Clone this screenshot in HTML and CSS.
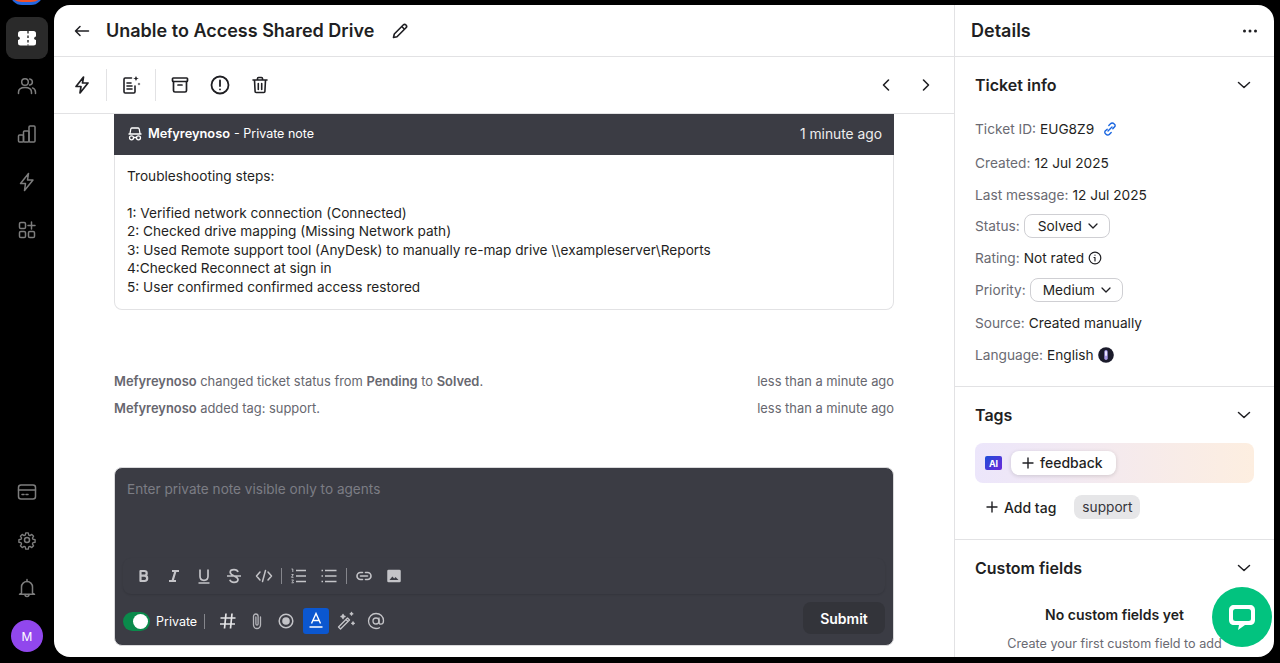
FILE: index.html
```html
<!DOCTYPE html>
<html>
<head>
    <meta charset="utf-8">
    <title>Ticket</title>
    <link rel="stylesheet" href="styles.css">
</head>
<body>
<nav class="rail">
    <div class="logo-sliver"></div>
    <a class="rail-item active">
        <svg width="20" height="20" viewBox="0 0 20 20"><rect x="1" y="3" width="18" height="14.5" rx="2.5" fill="#fff"/><circle cx="1" cy="10.2" r="1.8" fill="#2a2a2a"/><circle cx="19" cy="10.2" r="1.8" fill="#2a2a2a"/><path d="M11 3v14.500" stroke="#2a2a2a" stroke-width="1.4" stroke-dasharray="2.5 2"/></svg>
    </a>
    <a class="rail-item">
        <svg width="20" height="20" viewBox="0 0 20 20" fill="none" stroke="#7d7d7d" stroke-width="1.5" stroke-linecap="round"><circle cx="8" cy="6" r="3.3"/><path d="M1.500 17.500v-1.200c0-2.900 2.400-4.800 6.500-4.800s6.500 1.900 6.500 4.800v1.200"/><path d="M12.700 2.900c1.600.3 2.700 1.600 2.700 3.100s-1.100 2.800-2.700 3.100M15.500 11.900c1.900.7 3 2.200 3 4.300v1.300"/></svg>
    </a>
    <a class="rail-item">
        <svg width="20" height="20" viewBox="0 0 20 20" fill="none" stroke="#7d7d7d" stroke-width="1.5" stroke-linejoin="round"><rect x="1.5" y="11" width="5" height="7" rx="1"/><rect x="6.5" y="7" width="5.5" height="11" rx="1"/><rect x="12" y="2" width="6" height="16" rx="1"/></svg>
    </a>
    <a class="rail-item">
        <svg width="20" height="20" viewBox="0 0 20 20" fill="none" stroke="#7d7d7d" stroke-width="1.5" stroke-linejoin="round"><path d="M11.500 1.500 3.500 11.500h5l-1 7 8.500-10.500h-5.500z"/></svg>
    </a>
    <a class="rail-item">
        <svg width="20" height="20" viewBox="0 0 20 20" fill="none" stroke="#7d7d7d" stroke-width="1.5" stroke-linecap="round"><rect x="2.5" y="2.5" width="6" height="6" rx="1.3"/><rect x="2.5" y="11.5" width="6" height="6" rx="1.3"/><rect x="11.5" y="11.5" width="6" height="6" rx="1.3"/><path d="M14.500 2v7M11 5.500h7"/></svg>
    </a>
    <div class="rail-spacer"></div>
    <a class="rail-item">
        <svg width="20" height="20" viewBox="0 0 20 20" fill="none" stroke="#7d7d7d" stroke-width="1.5" stroke-linecap="round"><rect x="1.5" y="3" width="17" height="14" rx="2.5"/><path d="M1.500 8h17M5 12.500h2M9 12.500h2"/></svg>
    </a>
    <a class="rail-item">
        <svg width="20" height="20" viewBox="0 0 24 24" fill="none" stroke="#7d7d7d" stroke-width="1.8" stroke-linejoin="round"><circle cx="12" cy="12" r="3"/><path d="M10.300 2.500h3.400l.6 2.900 1.600.7 2.500-1.600 2.400 2.400-1.600 2.500.7 1.600 2.900.6v3.400l-2.900.6-.7 1.600 1.600 2.500-2.400 2.400-2.500-1.600-1.600.7-.6 2.900h-3.400l-.6-2.900-1.600-.7-2.500 1.600-2.400-2.400 1.600-2.500-.7-1.600-2.900-.6v-3.400l2.900-.6.7-1.600-1.600-2.500 2.400-2.400 2.500 1.600 1.600-.7z" transform="translate(1.200 1.200) scale(.9)"/></svg>
    </a>
    <a class="rail-item">
        <svg width="20" height="20" viewBox="0 0 20 20" fill="none" stroke="#7d7d7d" stroke-width="1.5" stroke-linecap="round" stroke-linejoin="round"><path d="M4.500 15V9a5.500 5.500 0 0 1 11 0v6l2 1.300h-15z"/><path d="M10 1.500v2M8 16.500c0 1.300.8 2 2 2s2-.7 2-2"/></svg>
    </a>
    <div class="avatar">M</div>
</nav>

<div class="app">
    <main class="main">
        <header class="title-bar">
            <svg width="16" height="16" viewBox="0 0 16 16" fill="none" stroke="#1f1f23" stroke-width="1.5" stroke-linecap="round" stroke-linejoin="round"><path d="M14.500 8h-13M6 3.500 1.500 8 6 12.500"/></svg>
            <h1>Unable to Access Shared Drive</h1>
            <svg width="18" height="18" viewBox="0 0 18 18" fill="none" stroke="#1f1f23" stroke-width="1.6" stroke-linejoin="round"><path d="M2.500 15.500 3.300 12 12.200 3a1.900 1.900 0 0 1 2.800 2.800L6 14.700z"/><path d="m10.800 4.500 2.700 2.700"/></svg>
        </header>
        <div class="tool-bar">
            <span class="tool">
                <svg width="20" height="20" viewBox="0 0 20 20" fill="none" stroke="#1f1f23" stroke-width="1.7" stroke-linejoin="round"><path d="M11.500 2 4 11.500h5L8 18l8-10h-5.500z"/></svg>
            </span>
            <i class="tool-sep"></i>
            <span class="tool">
                <svg width="20" height="20" viewBox="0 0 20 20" fill="none" stroke="#1f1f23" stroke-width="1.6" stroke-linecap="round" stroke-linejoin="round"><path d="M10.500 3H4.200C3.500 3 3 3.500 3 4.200v12.600c0 .7.500 1.200 1.200 1.200h8.600c.7 0 1.200-.5 1.200-1.200V11"/><path d="M6 8h4M6 11h5M6 14h5"/><path d="M15 .5c.2 1.900 1.100 2.800 3 3-1.900.2-2.800 1.100-3 3-.2-1.900-1.100-2.800-3-3 1.900-.2 2.800-1.100 3-3zM18 7.500l.4 1.100 1.100.4-1.100.4-.4 1.100-.4-1.100-1.100-.4 1.100-.4z" fill="#1f1f23" stroke="none"/></svg>
            </span>
            <i class="tool-sep"></i>
            <span class="tool tool-wide">
                <svg width="20" height="20" viewBox="0 0 20 20" fill="none" stroke="#1f1f23" stroke-width="1.7" stroke-linecap="round" stroke-linejoin="round"><rect x="2.5" y="3" width="15" height="3.5" rx=".8"/><path d="M3.500 6.500v9c0 .8.500 1.500 1.500 1.500h10c1 0 1.500-.7 1.500-1.500v-9M8 10h4"/></svg>
            </span>
            <span class="tool tool-wide">
                <svg width="20" height="20" viewBox="0 0 20 20" fill="none" stroke="#1f1f23" stroke-width="1.8" stroke-linecap="round"><circle cx="10" cy="10" r="8.5"/><path d="M10 5.500v5.500M10 14.300v.1"/></svg>
            </span>
            <span class="tool tool-wide">
                <svg width="20" height="20" viewBox="0 0 20 20" fill="none" stroke="#1f1f23" stroke-width="1.6" stroke-linecap="round" stroke-linejoin="round"><path d="M3 5h14M7.500 5V3.500c0-.6.400-1 1-1h3c.6 0 1 .4 1 1V5M4.500 5l.6 11.500c0 .6.500 1 1.100 1h7.600c.6 0 1.100-.4 1.100-1L15.500 5M8.300 8.500v6M11.700 8.500v6"/></svg>
            </span>
            <div class="pager">
                <svg width="16" height="16" viewBox="0 0 16 16" fill="none" stroke="#1f1f23" stroke-width="1.6" stroke-linecap="round" stroke-linejoin="round"><path d="M10.500 3 5.500 8l5 5"/></svg>
                <svg width="16" height="16" viewBox="0 0 16 16" fill="none" stroke="#1f1f23" stroke-width="1.6" stroke-linecap="round" stroke-linejoin="round"><path d="m5.500 3 5 5-5 5"/></svg>
            </div>
        </div>

        <div class="thread">
            <article class="note">
                <div class="note-head">
                    <svg width="16" height="16" viewBox="0 0 16 16" fill="none" stroke="#fff" stroke-width="1.3" stroke-linejoin="round"><path d="M3 7.500 3.800 3c.1-.6.500-1 1.100-1h6.200c.6 0 1 .4 1.100 1l.8 4.500M1.500 8h13"/><circle cx="4.500" cy="11.800" r="2"/><circle cx="11.500" cy="11.800" r="2"/><path d="M6.500 11.500h3"/></svg>
                    <strong>Mefyreynoso</strong>
                    <span class="note-kind">- Private note</span>
                    <span class="note-time">1 minute ago</span>
                </div>
                <div class="note-body">
                    <p>Troubleshooting steps:</p>
                    <p class="note-steps">1: Verified network connection (Connected)<br>
                    2: Checked drive mapping (Missing Network path)<br>
                    3: Used Remote support tool (AnyDesk) to manually re-map drive \\exampleserver\Reports<br>
                    4:Checked Reconnect at sign in<br>
                    5: User confirmed confirmed access restored</p>
                </div>
            </article>

            <div class="events">
                <div class="event"><span><b>Mefyreynoso</b> changed ticket status from <b>Pending</b> to <b>Solved</b>.</span><span>less than a minute ago</span></div>
                <div class="event"><span><b>Mefyreynoso</b> added tag: support.</span><span>less than a minute ago</span></div>
            </div>

            <div class="composer">
                <div class="placeholder">Enter private note visible only to agents</div>
                <div class="format-bar">
                    <svg class="fmt" width="18" height="18" viewBox="0 0 18 18" fill="none" stroke="#c4c4c8" stroke-width="2.2" stroke-linejoin="round"><path d="M5.500 4h3.800c1.500 0 2.400.9 2.400 2.200S10.800 8.700 9.300 8.700c1.800 0 2.900 1 2.900 2.600S11.100 14 9.500 14h-4zM5.500 8.700h3.500"/></svg>
                    <svg class="fmt" width="18" height="18" viewBox="0 0 18 18" fill="none" stroke="#c4c4c8" stroke-width="2.2"><path d="M7 4h7M4 14h7M10.500 4l-3 10"/></svg>
                    <svg class="fmt" width="18" height="18" viewBox="0 0 18 18" fill="none" stroke="#c4c4c8" stroke-width="1.7"><path d="M5 2.500v6.800c0 2.600 1.500 4 4 4s4-1.400 4-4V2.500M3.500 16h11"/></svg>
                    <svg class="fmt" width="18" height="18" viewBox="0 0 18 18" fill="none" stroke="#c4c4c8" stroke-width="1.7"><path d="M2 9h14M13 5c-.4-1.500-1.900-2.300-4-2.300S5.200 3.700 5.200 5.300C5.200 9 13 9 13 12.500c0 1.700-1.700 2.800-4 2.800s-3.700-.9-4.200-2.500"/></svg>
                    <svg class="fmt" width="18" height="18" viewBox="0 0 18 18" fill="none" stroke="#c4c4c8" stroke-width="1.5" stroke-linecap="round" stroke-linejoin="round"><path d="M5 5 1.500 9 5 13M13 5l3.500 4-3.500 4M10.500 3.500l-3 11"/></svg>
                    <i class="fmt-sep"></i>
                    <svg class="fmt" width="18" height="18" viewBox="0 0 18 18" fill="none" stroke="#c4c4c8" stroke-width="1.4"><path d="M6 3.500h10M6 9h10M6 14.500h10"/><path d="M1.500 2h1.300v3M1.500 7.500h1.800L1.500 10.300h2M1.500 13h2l-1 1.300 1 1.500h-2" stroke-width=".9"/></svg>
                    <svg class="fmt" width="18" height="18" viewBox="0 0 18 18" fill="none" stroke="#c4c4c8" stroke-width="1.4"><path d="M5 3.500h11.500M5 9h11.500M5 14.500h11.500M1.500 3.500h1.500M1.500 9h1.500M1.500 14.500h1.500"/></svg>
                    <i class="fmt-sep"></i>
                    <svg class="fmt" width="18" height="18" viewBox="0 0 18 18" fill="none" stroke="#c4c4c8" stroke-width="1.6" stroke-linecap="round"><path d="M7.500 5.500H5.500a3.500 3.500 0 0 0 0 7h2M10.500 5.500h2a3.500 3.500 0 0 1 0 7h-2M5.500 9h7"/></svg>
                    <svg class="fmt" width="18" height="18" viewBox="-1 -1 20 20"><path d="M3 2h12a1.500 1.500 0 0 1 1.500 1.500v11A1.500 1.500 0 0 1 15 16H3a1.500 1.500 0 0 1-1.500-1.500v-11A1.500 1.500 0 0 1 3 2z" fill="#c4c4c8"/><path d="m4 13.500 3.200-4 2 2.400 1.500-1.700 3.300 3.300z" fill="#3b3c44"/></svg>
                </div>
                <div class="action-bar">
                    <span class="toggle"><i></i></span>
                    <span class="toggle-label">Private</span>
                    <i class="action-sep"></i>
                    <svg class="act" width="18" height="18" viewBox="0 0 18 18" fill="none" stroke="#e4e4e6" stroke-width="1.7"><path d="M7 1.500 5.500 16.500M13 1.500l-1.500 15M1.500 6h15M1 12h15"/></svg>
                    <svg class="act" width="18" height="18" viewBox="0 0 18 18" fill="none" stroke="#b5b5ba" stroke-width="1.3" stroke-linecap="round"><path d="M12.500 5v8a3.500 3.500 0 0 1-7 0V4.300a2.300 2.300 0 0 1 4.600 0V12a1 1 0 0 1-2.200 0V5"/></svg>
                    <svg class="act" width="18" height="18" viewBox="0 0 18 18" fill="none"><circle cx="9" cy="9" r="6.800" stroke="#c4c4c8" stroke-width="1.5"/><circle cx="9" cy="9" r="3.800" fill="#c4c4c8"/></svg>
                    <span class="text-color">
                        <svg width="18" height="18" viewBox="0 0 18 18" fill="none" stroke="#fff" stroke-width="1.4"><path d="M4.500 11.500 9 1.500l4.500 10M6 8.500h6M2.500 15h13"/></svg>
                    </span>
                    <svg class="act" width="20" height="20" viewBox="0 0 20 20" fill="none" stroke="#c4c4c8" stroke-width="1.4" stroke-linejoin="round"><path d="m2.500 16 9-9 2 2-9 9z"/><path d="m10 8.500 2 2M7 3.500l.5 1.500 1.500.5-1.500.5L7 7.500 6.500 6 5 5.500 6.500 5zM15.500 1.500l.3 1 1 .3-1 .3-.3 1-.3-1-1-.3 1-.3zM17 11l.3 1 1 .3-1 .3-.3 1-.3-1-1-.3 1-.3z"/></svg>
                    <svg class="act" width="18" height="18" viewBox="0 0 18 18" fill="none" stroke="#c4c4c8" stroke-width="1.3" stroke-linecap="round"><circle cx="9" cy="9" r="3"/><path d="M12 6v4c0 1.400.8 2.200 1.900 2.200 1.500 0 2.600-1.300 2.600-3.400C16.500 4.500 13.300 1.500 9 1.500A7.500 7.500 0 0 0 9 16.500c1.300 0 2.400-.2 3.500-.8"/></svg>
                    <button class="submit">Submit</button>
                </div>
            </div>
        </div>
    </main>

    <aside class="details">
        <header class="details-head">
            <h2>Details</h2>
            <svg width="16" height="16" viewBox="0 0 16 16" fill="#1f1f23"><circle cx="2.5" cy="8" r="1.5"/><circle cx="8" cy="8" r="1.5"/><circle cx="13.5" cy="8" r="1.5"/></svg>
        </header>

        <section class="panel panel-info">
            <div class="panel-head"><h3>Ticket info</h3><svg class="chev" width="16" height="16" viewBox="0 0 16 16" fill="none" stroke="#1f1f23" stroke-width="1.5" stroke-linecap="round" stroke-linejoin="round"><path d="m2.500 5.500 5.500 5 5.500-5"/></svg></div>
            <div class="row"><span class="key">Ticket ID:</span><span>EUG8Z9</span>
                <svg class="link-icon" width="14" height="14" viewBox="0 0 14 14" fill="none" stroke="#1a66e0" stroke-width="1.4" stroke-linecap="round"><path d="M5.800 3.500 7.500 1.800a2.400 2.400 0 0 1 3.500 0l1 1a2.400 2.400 0 0 1 0 1.500L9.800 6.800M8.200 10.500 6.500 12.200a2.400 2.400 0 0 1-3.500 0l-1-1a2.400 2.400 0 0 1 0-2L4.200 7.200M5 9l4-4"/></svg>
            </div>
            <div class="row row-created"><span class="key">Created:</span><span>12 Jul 2025</span></div>
            <div class="row"><span class="key">Last message:</span><span>12 Jul 2025</span></div>
            <div class="row row-status"><span class="key">Status:</span><span class="select select-status">Solved<svg width="10" height="10" viewBox="0 0 10 10" fill="none" stroke="#1f1f23" stroke-width="1.3" stroke-linecap="round" stroke-linejoin="round"><path d="m1 3 4 4 4-4"/></svg></span></div>
            <div class="row"><span class="key">Rating:</span><span>Not rated</span>
                <svg width="14" height="14" viewBox="0 0 14 14" fill="none" stroke="#1f1f23" stroke-width="1.2" stroke-linecap="round"><circle cx="7" cy="7" r="5.8"/><path d="M7 6.500v3.500M7 4.100v.1M6 6.500h1"/></svg>
            </div>
            <div class="row"><span class="key">Priority:</span><span class="select">Medium<svg width="10" height="10" viewBox="0 0 10 10" fill="none" stroke="#1f1f23" stroke-width="1.3" stroke-linecap="round" stroke-linejoin="round"><path d="m1 3 4 4 4-4"/></svg></span></div>
            <div class="row row-source"><span class="key">Source:</span><span>Created manually</span></div>
            <div class="row"><span class="key">Language:</span><span>English</span>
                <svg width="16" height="16" viewBox="0 0 16 16"><circle cx="8" cy="8" r="7.8" fill="#1b1b2b"/><rect x="6.3" y="3" width="3.4" height="10" rx="1.7" fill="#a99be8"/><rect x="7" y="4" width="2" height="5" rx="1" fill="#e8e4ff"/></svg>
            </div>
        </section>

        <section class="panel panel-tags">
            <div class="panel-head"><h3>Tags</h3><svg class="chev" width="16" height="16" viewBox="0 0 16 16" fill="none" stroke="#1f1f23" stroke-width="1.5" stroke-linecap="round" stroke-linejoin="round"><path d="m2.500 5.500 5.500 5 5.500-5"/></svg></div>
            <div class="ai-tags">
                <span class="ai-badge">AI</span>
                <span class="ai-tag"><svg width="12" height="12" viewBox="0 0 12 12" fill="none" stroke="#1f1f23" stroke-width="1.4" stroke-linecap="round"><path d="M6 1v10M1 6h10"/></svg>feedback</span>
            </div>
            <div class="tag-row">
                <span class="add-tag"><svg width="12" height="12" viewBox="0 0 12 12" fill="none" stroke="#1f1f23" stroke-width="1.4" stroke-linecap="round"><path d="M6 1v10M1 6h10"/></svg>Add tag</span>
                <span class="tag">support</span>
            </div>
        </section>

        <section class="panel panel-custom">
            <div class="panel-head"><h3>Custom fields</h3><svg class="chev" width="16" height="16" viewBox="0 0 16 16" fill="none" stroke="#1f1f23" stroke-width="1.5" stroke-linecap="round" stroke-linejoin="round"><path d="m2.500 5.500 5.500 5 5.500-5"/></svg></div>
            <div class="empty-title">No custom fields yet</div>
            <div class="empty-text">Create your first custom field to add</div>
        </section>
    </aside>
</div>

<button class="chat-bubble">
    <svg width="34" height="34" viewBox="0 0 34 34" fill="none"><path d="M9 5h16c3 0 5 2 5 5v10c0 3-2 5-5 5h-5l-7 5 1-5H9c-3 0-5-2-5-5V10c0-3 2-5 5-5z" fill="#fff"/><rect x="8" y="9" width="18" height="12" rx="2.5" fill="#02c37f"/></svg>
</button>
</body>
</html>
```

FILE: styles.css
```css
* {
    box-sizing: border-box;
}

html, body {
    height: 100%;
}

body {
    margin: 0;
    display: flex;
    height: 663px;
    overflow: hidden;
    background: #000;
    color: #1f1f23;
    font-family: Inter, "Noto Sans", sans-serif;
    font-size: 14px;
}

svg {
    flex: none;
    display: block;
}

/* left rail */
.rail {
    width: 54px;
    flex: none;
    display: flex;
    flex-direction: column;
    align-items: center;
    padding-top: 17px;
    padding-bottom: 11px;
    position: relative;
}

.logo-sliver {
    position: absolute;
    top: -28px;
    left: 10px;
    width: 33px;
    height: 33px;
    border-radius: 12px;
    background: #f0512a;
    border-bottom: 3px solid #2367e0;
}

.rail-item {
    width: 42px;
    height: 42px;
    margin-bottom: 6px;
    display: flex;
    align-items: center;
    justify-content: center;
    border-radius: 9px;
}

.rail-item.active {
    background: #2a2a2a;
}

.rail-spacer {
    flex: 1;
}

.avatar {
    width: 32px;
    height: 32px;
    margin-top: 5px;
    border-radius: 50%;
    background: #9147ed;
    color: #fff;
    font-size: 12px;
    display: flex;
    align-items: center;
    justify-content: center;
}

/* app window */
.app {
    width: 1220px;
    height: 652px;
    margin-top: 5px;
    display: flex;
    background: #fff;
    border-radius: 16px;
    overflow: hidden;
}

.main {
    width: 901px;
    flex: none;
    display: flex;
    flex-direction: column;
    border-right: 1px solid #e2e2e4;
}

.title-bar {
    height: 52px;
    flex: none;
    display: flex;
    align-items: center;
    padding-left: 20px;
    border-bottom: 1px solid #e2e2e4;
}

.title-bar h1 {
    margin: 0 17px 0 16px;
    font-size: 18px;
    font-weight: 600;
}

.tool-bar {
    height: 57px;
    flex: none;
    display: flex;
    align-items: center;
    padding-left: 18px;
    border-bottom: 1px solid #e2e2e4;
}

.tool {
    width: 20px;
    display: flex;
    margin-right: 14px;
}

.tool-sep {
    width: 1px;
    height: 32px;
    margin-right: 14px;
    background: #e2e2e4;
}

.tool-wide {
    margin-right: 20px;
}

.pager {
    margin-left: auto;
    padding-right: 20px;
    display: flex;
    gap: 24px;
}

.thread {
    flex: 1;
    padding: 0 60px;
    overflow: hidden;
}

.note {
    height: 196px;
    border: 1px solid #e2e2e4;
    border-top: 0;
    border-radius: 0 0 8px 8px;
}

.note-head {
    height: 41px;
    margin: 0 -1px;
    padding: 0 12px 2px 13px;
    display: flex;
    align-items: center;
    background: #3b3c44;
    color: #fff;
    font-size: 13px;
}

.note-head strong {
    margin-left: 5px;
    font-size: 12.8px;
    font-weight: 600;
}

.note-kind {
    margin-left: 4px;
    font-size: 12.5px;
}

.note-time {
    margin-left: auto;
    font-size: 13.8px;
    line-height: 16px;
    color: #eee;
}

.note-body {
    padding: 12px 12px 0;
    line-height: 18.5px;
    font-size: 13.65px;
}

.note-body p {
    margin: 0;
}

.note-steps {
    padding-top: 18px;
}

.events {
    margin-top: 58px;
    color: #67676f;
    font-size: 12.9px;
}

.event {
    height: 27px;
    display: flex;
    align-items: center;
    justify-content: space-between;
}

.event b {
    font-weight: 600;
}

.composer {
    height: 179px;
    margin-top: 45px;
    padding: 0 8px;
    display: flex;
    flex-direction: column;
    background: #3b3c44;
    border: 1px solid #d9d9db;
    border-radius: 8px;
    color: #fff;
}

.placeholder {
    height: 90px;
    padding: 12px 4px 0;
    color: #7c7d84;
    font-size: 13.6px;
    line-height: 18px;
}

.format-bar {
    height: 36px;
    display: flex;
    align-items: center;
    padding-left: 12px;
    margin-right: 0;
    border-radius: 8px;
    background: #3b3c44;
    box-shadow: 0 1px 2px rgba(0, 0, 0, .12);
}

.fmt {
    margin-right: 12px;
}

.fmt-sep {
    width: 1px;
    height: 16px;
    margin: 0 8px 0 -4px;
    background: #85868c;
}

.action-bar {
    height: 44px;
    margin-top: 5px;
    display: flex;
    align-items: center;
}

.toggle {
    width: 27px;
    height: 19px;
    padding: 2px;
    display: flex;
    justify-content: flex-end;
    border-radius: 10px;
    background: #0a8a4b;
}

.toggle i {
    width: 15px;
    height: 15px;
    border-radius: 50%;
    background: #fff;
}

.toggle-label {
    margin-left: 6px;
    font-size: 12.5px;
}

.action-sep {
    width: 1px;
    height: 15px;
    margin: 0 14px 0 7px;
    background: #85868c;
}

.act {
    margin-right: 11px;
}

.text-color {
    width: 26px;
    height: 26px;
    margin: 0 7px 0 -3px;
    display: flex;
    align-items: center;
    justify-content: center;
    border-radius: 3px;
    background: #0b57d0;
}

.submit {
    margin: 0 0 6px auto;
    width: 82px;
    height: 32px;
    border: 0;
    border-radius: 8px;
    background: #33343a;
    color: #fff;
    font: 600 14px Inter, sans-serif;
}

/* details column */
.details {
    flex: 1;
    min-width: 0;
    font-size: 13.7px;
}

.details-head {
    height: 52px;
    display: flex;
    align-items: center;
    justify-content: space-between;
    padding: 0 16px;
    border-bottom: 1px solid #e2e2e4;
}

.details-head h2 {
    margin: 0;
    font-size: 18px;
    font-weight: 600;
}

.panel {
    padding: 0 20px;
    border-bottom: 1px solid #e2e2e4;
}

.panel-head {
    height: 56px;
    display: flex;
    align-items: center;
    justify-content: space-between;
}

.panel-head h3 {
    margin: 0;
    font-size: 16px;
    font-weight: 600;
}

.chev {
    margin-right: 2px;
}

.panel-info {
    height: 330px;
}

.row {
    height: 32px;
    display: flex;
    align-items: center;
    gap: 4px;
    white-space: nowrap;
}

.key {
    color: #6a6a72;
}

.link-icon {
    margin-left: 5px;
}

.row-created {
    margin-top: 2px;
}

.row-source {
    margin-top: 1px;
}

.row-status {
    margin-top: -1px;
}

.select {
    height: 24px;
    padding: 0 11px 0 12px;
    display: flex;
    align-items: center;
    border: 1px solid #cfcfd3;
    border-radius: 8px;
}

.select svg {
    margin-left: 6px;
}

.select-status {
    padding-left: 13px;
}

.panel-tags {
    height: 153px;
}

.ai-tags {
    height: 40px;
    padding-left: 10px;
    display: flex;
    align-items: center;
    gap: 9px;
    border-radius: 8px;
    background: linear-gradient(90deg, #ece6fb, #fdeee0);
}

.ai-badge {
    width: 17px;
    height: 14px;
    display: flex;
    align-items: center;
    justify-content: center;
    border-radius: 2px;
    background: linear-gradient(135deg, #1d4ed8, #6d28d9);
    color: #fff;
    font-size: 9px;
    font-weight: 700;
}

.ai-tag {
    height: 24px;
    padding: 0 13px 0 11px;
    display: flex;
    align-items: center;
    gap: 6px;
    border-radius: 8px;
    background: #fff;
    box-shadow: 0 1px 4px rgba(0, 0, 0, .15);
    font-size: 14px;
    font-weight: 500;
    line-height: 22px;
}

.tag-row {
    margin-top: 12px;
    padding-left: 11px;
    display: flex;
    align-items: center;
}

.add-tag {
    display: flex;
    align-items: center;
    gap: 6px;
    font-size: 14px;
    font-weight: 500;
}

.tag {
    height: 24px;
    margin-left: 18px;
    padding: 0 8px;
    display: flex;
    align-items: center;
    border-radius: 8px;
    background: #e6e6e8;
    color: #35353b;
}

.panel-custom {
    border-bottom: 0;
}

.empty-title {
    margin-top: 10px;
    text-align: center;
    font-size: 14px;
    font-weight: 600;
}

.empty-text {
    margin-top: 13px;
    text-align: center;
    color: #6a6a72;
    font-size: 12.6px;
    white-space: nowrap;
}

.chat-bubble {
    position: absolute;
    left: 1212px;
    top: 587px;
    width: 60px;
    height: 60px;
    padding: 0;
    display: flex;
    align-items: center;
    justify-content: center;
    border: 0;
    border-radius: 50%;
    background: #02c37f;
}
```
